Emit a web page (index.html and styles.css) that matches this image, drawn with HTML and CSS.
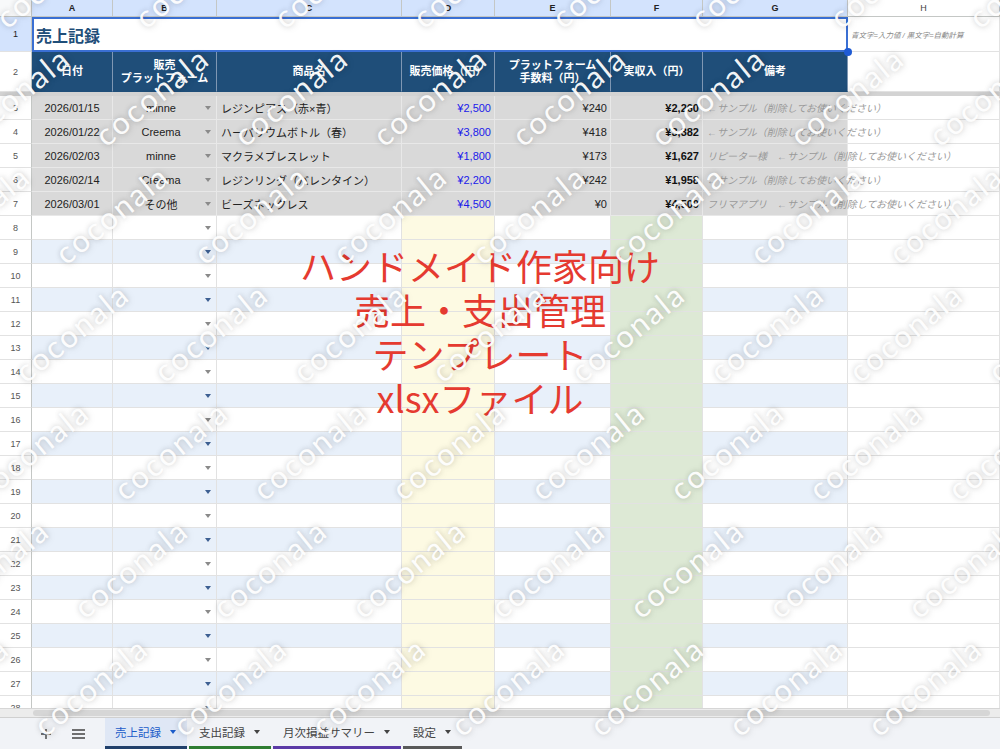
FILE: index.html
```html
<!DOCTYPE html>
<html lang="ja">
<head>
    <meta charset="UTF-8">
    <title>売上記録</title>
    <link rel="stylesheet" href="styles.css">
</head>
<body>
<div class="app">
    <div class="sheet">
        <div class="row colhead">
            <div class="corner"></div>
            <div class="sel">A</div><div class="sel">B</div><div class="sel">C</div><div class="sel">D</div>
            <div class="sel">E</div><div class="sel">F</div><div class="sel">G</div><div>H</div>
        </div>

        <div class="row r-title">
            <div class="rn on">1</div>
            <div class="title">売上記録</div>
            <div class="legend">青文字=入力値 / 黒文字=自動計算</div>
        </div>

        <div class="row r-head">
            <div class="rn">2</div>
            <div class="hd">日付</div>
            <div class="hd">販売<br>プラットフォーム</div>
            <div class="hd">商品名</div>
            <div class="hd">販売価格（円）</div>
            <div class="hd">プラットフォーム<br>手数料（円）</div>
            <div class="hd">実収入（円）</div>
            <div class="hd">備考</div>
            <div class="c-h"></div>
        </div>

        <div class="freeze"></div>

        <div class="row sample"><div class="rn">3</div><div class="c mid">2026/01/15</div><div class="c pick"><span>minne</span><i class="dd"></i></div><div class="c">レジンピアス（赤×青）</div><div class="c num blue">¥2,500</div><div class="c num">¥240</div><div class="c num bold">¥2,260</div><div class="c note">←サンプル（削除してお使いください）</div><div class="c-h"></div></div>
        <div class="row sample"><div class="rn">4</div><div class="c mid">2026/01/22</div><div class="c pick"><span>Creema</span><i class="dd"></i></div><div class="c">ハーバリウムボトル（春）</div><div class="c num blue">¥3,800</div><div class="c num">¥418</div><div class="c num bold">¥3,382</div><div class="c note">←サンプル（削除してお使いください）</div><div class="c-h"></div></div>
        <div class="row sample"><div class="rn">5</div><div class="c mid">2026/02/03</div><div class="c pick"><span>minne</span><i class="dd"></i></div><div class="c">マクラメブレスレット</div><div class="c num blue">¥1,800</div><div class="c num">¥173</div><div class="c num bold">¥1,627</div><div class="c note">リピーター様　←サンプル（削除してお使いください）</div><div class="c-h"></div></div>
        <div class="row sample"><div class="rn">6</div><div class="c mid">2026/02/14</div><div class="c pick"><span>Creema</span><i class="dd"></i></div><div class="c">レジンリング（バレンタイン）</div><div class="c num blue">¥2,200</div><div class="c num">¥242</div><div class="c num bold">¥1,958</div><div class="c note">←サンプル（削除してお使いください）</div><div class="c-h"></div></div>
        <div class="row sample"><div class="rn">7</div><div class="c mid">2026/03/01</div><div class="c pick"><span>その他</span><i class="dd"></i></div><div class="c">ビーズネックレス</div><div class="c num blue">¥4,500</div><div class="c num">¥0</div><div class="c num bold">¥4,500</div><div class="c note">フリマアプリ　←サンプル（削除してお使いください）</div><div class="c-h"></div></div>

        <div class="row"><div class="rn">8</div><div class="c"></div><div class="c pick"><span></span><i class="dd"></i></div><div class="c"></div><div class="c yel"></div><div class="c"></div><div class="c grn"></div><div class="c"></div><div class="c-h"></div></div>
        <div class="row alt"><div class="rn">9</div><div class="c"></div><div class="c pick"><span></span><i class="dd"></i></div><div class="c"></div><div class="c yel"></div><div class="c"></div><div class="c grn"></div><div class="c"></div><div class="c-h"></div></div>
        <div class="row"><div class="rn">10</div><div class="c"></div><div class="c pick"><span></span><i class="dd"></i></div><div class="c"></div><div class="c yel"></div><div class="c"></div><div class="c grn"></div><div class="c"></div><div class="c-h"></div></div>
        <div class="row alt"><div class="rn">11</div><div class="c"></div><div class="c pick"><span></span><i class="dd"></i></div><div class="c"></div><div class="c yel"></div><div class="c"></div><div class="c grn"></div><div class="c"></div><div class="c-h"></div></div>
        <div class="row"><div class="rn">12</div><div class="c"></div><div class="c pick"><span></span><i class="dd"></i></div><div class="c"></div><div class="c yel"></div><div class="c"></div><div class="c grn"></div><div class="c"></div><div class="c-h"></div></div>
        <div class="row alt"><div class="rn">13</div><div class="c"></div><div class="c pick"><span></span><i class="dd"></i></div><div class="c"></div><div class="c yel"></div><div class="c"></div><div class="c grn"></div><div class="c"></div><div class="c-h"></div></div>
        <div class="row"><div class="rn">14</div><div class="c"></div><div class="c pick"><span></span><i class="dd"></i></div><div class="c"></div><div class="c yel"></div><div class="c"></div><div class="c grn"></div><div class="c"></div><div class="c-h"></div></div>
        <div class="row alt"><div class="rn">15</div><div class="c"></div><div class="c pick"><span></span><i class="dd"></i></div><div class="c"></div><div class="c yel"></div><div class="c"></div><div class="c grn"></div><div class="c"></div><div class="c-h"></div></div>
        <div class="row"><div class="rn">16</div><div class="c"></div><div class="c pick"><span></span><i class="dd"></i></div><div class="c"></div><div class="c yel"></div><div class="c"></div><div class="c grn"></div><div class="c"></div><div class="c-h"></div></div>
        <div class="row alt"><div class="rn">17</div><div class="c"></div><div class="c pick"><span></span><i class="dd"></i></div><div class="c"></div><div class="c yel"></div><div class="c"></div><div class="c grn"></div><div class="c"></div><div class="c-h"></div></div>
        <div class="row"><div class="rn">18</div><div class="c"></div><div class="c pick"><span></span><i class="dd"></i></div><div class="c"></div><div class="c yel"></div><div class="c"></div><div class="c grn"></div><div class="c"></div><div class="c-h"></div></div>
        <div class="row alt"><div class="rn">19</div><div class="c"></div><div class="c pick"><span></span><i class="dd"></i></div><div class="c"></div><div class="c yel"></div><div class="c"></div><div class="c grn"></div><div class="c"></div><div class="c-h"></div></div>
        <div class="row"><div class="rn">20</div><div class="c"></div><div class="c pick"><span></span><i class="dd"></i></div><div class="c"></div><div class="c yel"></div><div class="c"></div><div class="c grn"></div><div class="c"></div><div class="c-h"></div></div>
        <div class="row alt"><div class="rn">21</div><div class="c"></div><div class="c pick"><span></span><i class="dd"></i></div><div class="c"></div><div class="c yel"></div><div class="c"></div><div class="c grn"></div><div class="c"></div><div class="c-h"></div></div>
        <div class="row"><div class="rn">22</div><div class="c"></div><div class="c pick"><span></span><i class="dd"></i></div><div class="c"></div><div class="c yel"></div><div class="c"></div><div class="c grn"></div><div class="c"></div><div class="c-h"></div></div>
        <div class="row alt"><div class="rn">23</div><div class="c"></div><div class="c pick"><span></span><i class="dd"></i></div><div class="c"></div><div class="c yel"></div><div class="c"></div><div class="c grn"></div><div class="c"></div><div class="c-h"></div></div>
        <div class="row"><div class="rn">24</div><div class="c"></div><div class="c pick"><span></span><i class="dd"></i></div><div class="c"></div><div class="c yel"></div><div class="c"></div><div class="c grn"></div><div class="c"></div><div class="c-h"></div></div>
        <div class="row alt"><div class="rn">25</div><div class="c"></div><div class="c pick"><span></span><i class="dd"></i></div><div class="c"></div><div class="c yel"></div><div class="c"></div><div class="c grn"></div><div class="c"></div><div class="c-h"></div></div>
        <div class="row"><div class="rn">26</div><div class="c"></div><div class="c pick"><span></span><i class="dd"></i></div><div class="c"></div><div class="c yel"></div><div class="c"></div><div class="c grn"></div><div class="c"></div><div class="c-h"></div></div>
        <div class="row alt"><div class="rn">27</div><div class="c"></div><div class="c pick"><span></span><i class="dd"></i></div><div class="c"></div><div class="c yel"></div><div class="c"></div><div class="c grn"></div><div class="c"></div><div class="c-h"></div></div>
        <div class="row"><div class="rn">28</div><div class="c"></div><div class="c pick"><span></span><i class="dd"></i></div><div class="c"></div><div class="c yel"></div><div class="c"></div><div class="c grn"></div><div class="c"></div><div class="c-h"></div></div>

        <span class="handle"></span>
        <div class="promo">ハンドメイド作家向け<br>売上・支出管理<br>テンプレート<br>xlsxファイル</div>
    </div>

    <div class="hscroll"><span class="thumb"></span></div>

    <div class="tabs">
        <span class="tool">
            <svg width="12" height="12" viewBox="0 0 12 12"><path d="M6 1v10M1 6h10" stroke="#444" stroke-width="1.4"/></svg>
        </span>
        <span class="tool">
            <svg width="13" height="10" viewBox="0 0 13 10"><path d="M0 1h13M0 5h13M0 9h13" stroke="#444" stroke-width="1.3"/></svg>
        </span>
        <div class="tab active navy">売上記録<i class="caret"></i></div>
        <div class="tab green">支出記録<i class="caret"></i></div>
        <div class="tab purple">月次損益サマリー<i class="caret"></i></div>
        <div class="tab gray">設定<i class="caret"></i></div>
    </div>

    <div class="wm" aria-hidden="true">
        <div class="wm-row"><span>coconala</span><span>coconala</span><span>coconala</span><span>coconala</span><span>coconala</span><span>coconala</span><span>coconala</span><span>coconala</span><span>coconala</span></div>
        <div class="wm-row"><span>coconala</span><span>coconala</span><span>coconala</span><span>coconala</span><span>coconala</span><span>coconala</span><span>coconala</span><span>coconala</span><span>coconala</span></div>
        <div class="wm-row"><span>coconala</span><span>coconala</span><span>coconala</span><span>coconala</span><span>coconala</span><span>coconala</span><span>coconala</span><span>coconala</span><span>coconala</span></div>
        <div class="wm-row"><span>coconala</span><span>coconala</span><span>coconala</span><span>coconala</span><span>coconala</span><span>coconala</span><span>coconala</span><span>coconala</span><span>coconala</span></div>
        <div class="wm-row"><span>coconala</span><span>coconala</span><span>coconala</span><span>coconala</span><span>coconala</span><span>coconala</span><span>coconala</span><span>coconala</span><span>coconala</span></div>
        <div class="wm-row"><span>coconala</span><span>coconala</span><span>coconala</span><span>coconala</span><span>coconala</span><span>coconala</span><span>coconala</span><span>coconala</span><span>coconala</span></div>
        <div class="wm-row"><span>coconala</span><span>coconala</span><span>coconala</span><span>coconala</span><span>coconala</span><span>coconala</span><span>coconala</span><span>coconala</span><span>coconala</span></div>
        <div class="wm-row"><span>coconala</span><span>coconala</span><span>coconala</span><span>coconala</span><span>coconala</span><span>coconala</span><span>coconala</span><span>coconala</span><span>coconala</span></div>
    </div>
</div>
</body>
</html>
```

FILE: styles.css
```css
body {
    margin: 0;
    font-family: "Liberation Sans", Arial, "Noto Sans CJK JP", sans-serif;
    font-size: 11px;
    color: #222;
    background: #fff;
}
.app {
    position: relative;
    height: 749px;
    display: flex;
    flex-direction: column;
    overflow: hidden;
}
.sheet {
    position: relative;
    height: 708px;
    flex: none;
    overflow: hidden;
}
.row {
    display: grid;
    grid-template-columns: 32px 81px 104px 185px 93px 116px 92px 145px 152px;
    height: 24px;
}
.row > div {
    box-sizing: border-box;
    display: flex;
    align-items: center;
    white-space: nowrap;
    border-right: 1px solid #e2e2e2;
    border-bottom: 1px solid #e2e2e2;
}

/* column letters */
.colhead {
    height: 17px;
}
.colhead > div {
    justify-content: center;
    font-size: 9px;
    color: #444;
    border-color: #c4c7c5;
}
.colhead .sel {
    background: #d3e3fd;
    font-weight: bold;
    color: #222;
}
.colhead .corner {
    background: #f8f9fa;
}

/* row numbers */
.rn {
    justify-content: center;
    font-size: 9px;
    color: #555;
    background: #fff;
    border-right-color: #c4c7c5 !important;
}
.rn.on {
    background: #d3e3fd;
    color: #222;
}

/* title row */
.r-title {
    height: 35px;
}
.row > .title {
    grid-column: span 7;
    border: 2px solid #3a6fd3;
    padding-left: 2px;
    font-size: 16px;
    font-weight: bold;
    color: #1f4e79;
    font-family: "Noto Sans CJK JP", sans-serif;
}
.legend {
    padding-left: 3px;
    font-size: 7.5px;
    font-style: italic;
    color: #888;
}
.handle {
    position: absolute;
    left: 844px;
    top: 48px;
    width: 8px;
    height: 8px;
    border-radius: 50%;
    background: #1f5bd4;
}

/* header row */
.r-head {
    height: 40px;
}
.row > .hd {
    justify-content: center;
    text-align: center;
    background: #1f4e79;
    color: #fff;
    font-weight: bold;
    line-height: 13px;
    border-right-color: #7f97b3;
    border-bottom-color: #1f4e79;
}
.freeze {
    height: 4px;
    background: #d3d3d3;
}

/* cells */
.c {
    padding: 0 4px;
    background: #fff;
}
.c.mid {
    justify-content: center;
}
.c.num {
    justify-content: flex-end;
    padding-right: 3px;
}
.blue {
    color: #1a1aea;
}
.bold {
    font-weight: bold;
    color: #111;
}
.c.note {
    font-size: 10px;
    font-style: italic;
    color: #9a9a9a;
    overflow: visible;
}
.pick span {
    flex: 1;
    text-align: center;
}
.dd {
    width: 0;
    height: 0;
    margin-right: 1px;
    border-left: 3.5px solid transparent;
    border-right: 3.5px solid transparent;
    border-top: 4px solid #8a8a8a;
}
.c-h {
    background: transparent;
}

.sample .c {
    background: #d9d9d9;
    border-color: #e8e8e8;
}
.alt .c {
    background: #e8f0fa;
}
.alt .dd {
    border-top-color: #3d5f92;
}
.row .c.yel {
    background: #fdfae3;
}
.row .c.grn {
    background: #dde9d5;
}

/* overlay headline */
.promo {
    position: absolute;
    top: 243px;
    left: 280px;
    width: 400px;
    text-align: center;
    font-family: "Noto Sans CJK JP", sans-serif;
    font-size: 36px;
    line-height: 44px;
    color: #e53a30;
}

/* scrollbar */
.hscroll {
    height: 10px;
    box-sizing: border-box;
    background: #ececec;
    border-top: 1px solid #d6d6d6;
    border-bottom: 1px solid #d0d0d0;
    padding: 1px 10px 0 33px;
}
.thumb {
    display: block;
    height: 6px;
    border-radius: 3px;
    background: #d6d6d6;
}

/* sheet tabs */
.tabs {
    flex: 1;
    display: flex;
    align-items: stretch;
    padding-left: 29px;
    background: #f1f3f7;
    font-family: "Noto Sans CJK JP", sans-serif;
    font-size: 11.5px;
    color: #444;
}
.tool {
    width: 33px;
    display: flex;
    align-items: center;
    justify-content: center;
}
.tool + .tool {
    margin-right: 10px;
}
.tab {
    display: flex;
    align-items: center;
    gap: 9px;
    padding: 0 11px 0 10px;
    margin-right: 2px;
    border-bottom: 3px solid #555;
}
.tab.active {
    background: #dfe7f5;
    color: #1b5cc9;
}
.tab.navy { border-bottom-color: #1f3f6b; }
.tab.green { border-bottom-color: #2e7d32; }
.tab.purple { border-bottom-color: #5b3aa6; }
.tab.gray { border-bottom-color: #595959; }
.caret {
    width: 0;
    height: 0;
    border-left: 3.5px solid transparent;
    border-right: 3.5px solid transparent;
    border-top: 4px solid #444;
}
.active .caret {
    border-top-color: #1b5cc9;
}

/* watermark: diagonal lattice, each row shifted along */
.wm {
    position: absolute;
    top: -81px;
    left: 0;
    pointer-events: none;
}
.wm-row {
    display: flex;
    height: 118px;
}
.wm-row:nth-child(1) { margin-left: -156px; }
.wm-row:nth-child(2) { margin-left: -57px; }
.wm-row:nth-child(3) { margin-left: -97px; }
.wm-row:nth-child(4) { margin-left: -137px; }
.wm-row:nth-child(5) { margin-left: -38px; }
.wm-row:nth-child(6) { margin-left: -78px; }
.wm-row:nth-child(7) { margin-left: -118px; }
.wm-row:nth-child(8) { margin-left: -19px; }
.wm-row span {
    flex: none;
    width: 139px;
    display: flex;
    align-items: center;
    justify-content: center;
    transform: rotate(-39deg);
    font-family: "Lato", sans-serif;
    font-size: 31px;
    letter-spacing: 2px;
    color: rgba(255, 255, 255, 0.95);
    text-shadow: 0 0 5px rgba(0, 0, 0, 0.15), 1px 1px 8px rgba(0, 0, 0, 0.12);
}
```
